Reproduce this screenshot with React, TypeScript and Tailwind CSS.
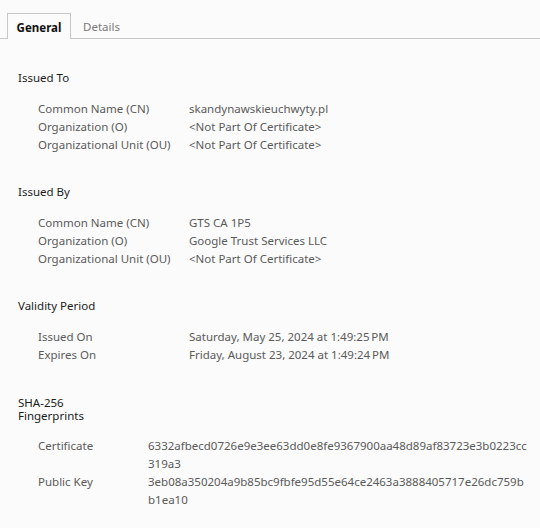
import React from "react";

type Row = { label: string; value: string[] };

function Section({
  title,
  rows,
  labelW,
  tall,
}: {
  title: React.ReactNode;
  rows: Row[];
  labelW: string;
  tall?: boolean;
}) {
  return (
    <div className="mb-[32px]">
      <div
        className={
          tall
            ? "pl-[18px] text-[11.5px] leading-[13px] text-[#1b1b1b]"
            : "pl-[18px] text-[11.5px] leading-[12px] text-[#1b1b1b]"
        }
      >
        {title}
      </div>
      <div className={tall ? "mt-[15px] pl-[38px]" : "mt-[16px] pl-[38px]"}>
        {rows.map((r) => (
          <div key={r.label} className="flex text-[11.5px] leading-[18px] text-[#5a5a5a]">
            <div className={labelW + " shrink-0"}>{r.label}</div>
            <div>
              {r.value.map((v, i) => (
                <div key={i}>{v}</div>
              ))}
            </div>
          </div>
        ))}
      </div>
    </div>
  );
}

export default function App() {
  return (
    <div
      className="w-[540px] h-[528px] bg-[#fbfbfb] overflow-hidden"
      style={{ fontFamily: '"Noto Sans", "Open Sans", sans-serif' }}
    >
      <div className="pt-[13px] flex items-end border-b border-[#c8c8c8]">
        <div className="w-[7px]" />
        <div className="relative -mb-px w-[64px] h-[26px] pt-[2px] border border-b-0 border-[#c8c8c8] bg-[#fbfbfb] flex items-center justify-center text-[11.5px] font-bold text-[#111]">
          General
        </div>
        <div className="h-[25px] pt-[2px] pl-[12px] flex items-center text-[11.5px] text-[#7a7a7a]">Details</div>
      </div>
      <div className="pt-[33px]">
        <Section
          title="Issued To"
          labelW="w-[151px]"
          rows={[
            { label: "Common Name (CN)", value: ["skandynawskieuchwyty.pl"] },
            { label: "Organization (O)", value: ["<Not Part Of Certificate>"] },
            { label: "Organizational Unit (OU)", value: ["<Not Part Of Certificate>"] },
          ]}
        />
        <Section
          title="Issued By"
          labelW="w-[151px]"
          rows={[
            { label: "Common Name (CN)", value: ["GTS CA 1P5"] },
            { label: "Organization (O)", value: ["Google Trust Services LLC"] },
            { label: "Organizational Unit (OU)", value: ["<Not Part Of Certificate>"] },
          ]}
        />
        <Section
          title="Validity Period"
          labelW="w-[151px]"
          rows={[
            { label: "Issued On", value: ["Saturday, May 25, 2024 at 1:49:25\u2009PM"] },
            { label: "Expires On", value: ["Friday, August 23, 2024 at 1:49:24\u2009PM"] },
          ]}
        />
        <Section
          tall
          title={
            <>
              SHA-256
              <br />
              Fingerprints
            </>
          }
          labelW="w-[110px]"
          rows={[
            {
              label: "Certificate",
              value: ["6332afbecd0726e9e3ee63dd0e8fe9367900aa48d89af83723e3b0223cc", "319a3"],
            },
            {
              label: "Public Key",
              value: ["3eb08a350204a9b85bc9fbfe95d55e64ce2463a3888405717e26dc759b", "b1ea10"],
            },
          ]}
        />
      </div>
    </div>
  );
}
